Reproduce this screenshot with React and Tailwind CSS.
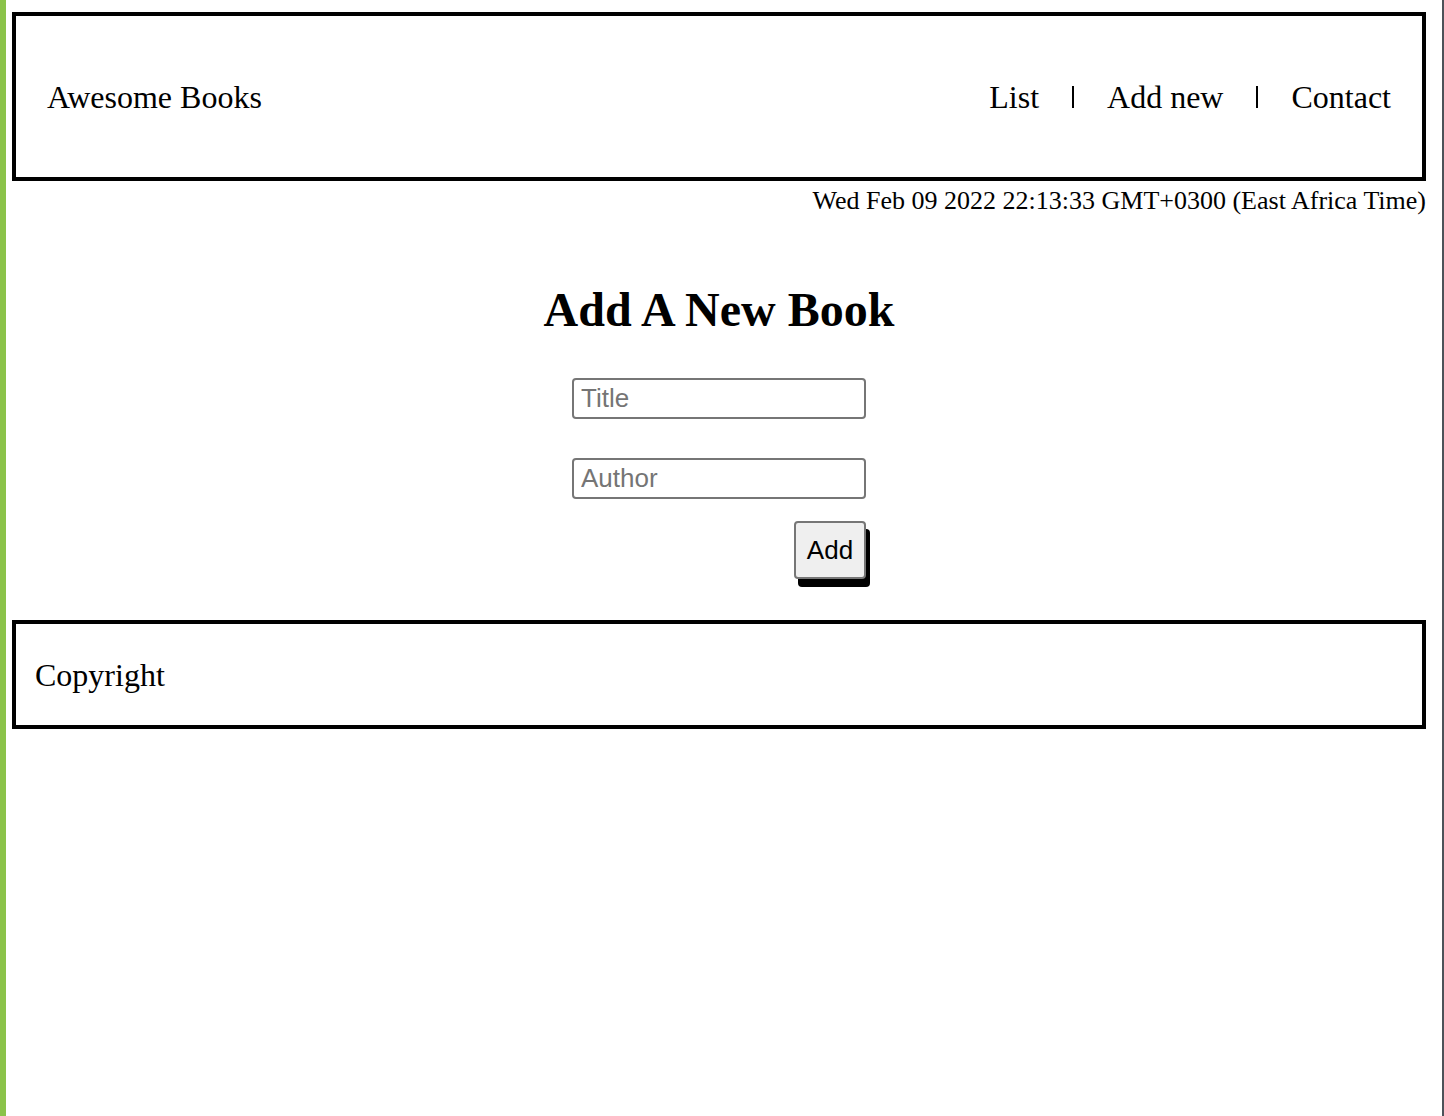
export default function App() {
  const serif = { fontFamily: '"Liberation Serif", "Times New Roman", serif' };
  const sans = { fontFamily: '"Liberation Sans", Arial, sans-serif' };
  return (
    <div className="flex min-h-screen w-full bg-white text-black">
      <div className="w-[6px] shrink-0 bg-[#8bc34a]" />
      <div className="flex-1 pl-[6px] pr-[16px] pt-[12px]" style={serif}>
        <header className="flex h-[169px] items-center justify-between border-4 border-black px-[31px] text-[32px]">
          <div>Awesome Books</div>
          <nav className="flex items-center gap-[33px]">
            <span>List</span>
            <span className="inline-block h-[22px] w-[2px] bg-black" />
            <span>Add new</span>
            <span className="inline-block h-[22px] w-[2px] bg-black" />
            <span>Contact</span>
          </nav>
        </header>
        <div className="mt-[5px] text-right text-[26px] leading-[30px]">
          Wed Feb 09 2022 22:13:33 GMT+0300 (East Africa Time)
        </div>
        <main className="flex flex-col items-center">
          <h1 className="mt-[66px] text-[48px] font-bold leading-[56px]">Add A New Book</h1>
          <form className="mt-[40px] flex w-[294px] flex-col items-end" onSubmit={(e) => e.preventDefault()}>
            <input
              type="text"
              placeholder="Title"
              className="h-[41px] w-[294px] rounded-[4px] border-2 border-[#767676] px-[7px] text-[26px] placeholder:text-[#757575] outline-none"
              style={sans}
            />
            <input
              type="text"
              placeholder="Author"
              className="mt-[39px] h-[41px] w-[294px] rounded-[4px] border-2 border-[#767676] px-[7px] text-[26px] placeholder:text-[#757575] outline-none"
              style={sans}
            />
            <button
              type="submit"
              className="mt-[22px] h-[58px] w-[72px] rounded-[4px] border-2 border-[#767676] bg-[#efefef] text-[26px] shadow-[4px_8px_0_0_#000]"
              style={sans}
            >
              Add
            </button>
          </form>
        </main>
        <footer className="mt-[41px] flex h-[109px] items-center border-4 border-black pl-[19px] text-[32px]">
          Copyright
        </footer>
      </div>
      <div className="w-[2px] shrink-0 bg-[#4d5259]" />
    </div>
  );
}
